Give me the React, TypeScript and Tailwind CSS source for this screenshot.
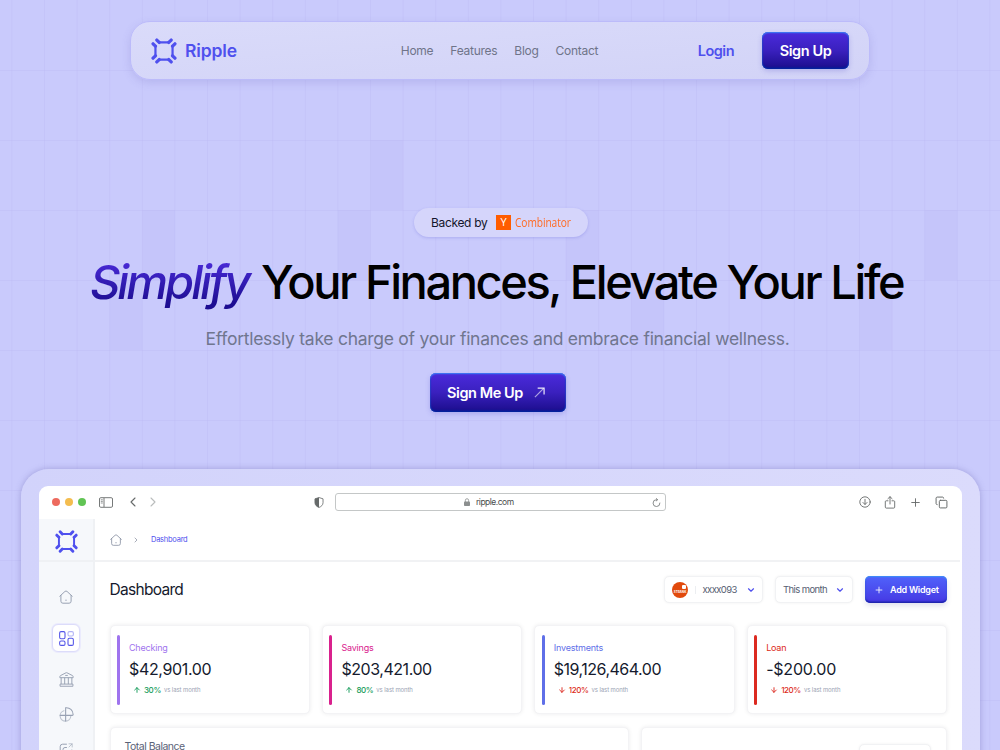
import { clsx } from "clsx";
import { ArrowDown, ArrowUp, ChevronDown, ChevronLeft, ChevronRight, Copy, Plus } from "lucide-react";

const LINKS = ["Home", "Features", "Blog", "Contact"];

// Columns and rows of the backdrop grid that carry a darker tile
const TILES = [
  [11, 2], [4, 3], [10, 3], [17, 3], [28, 3], [3, 4], [19, 4], [26, 4],
];

const ACCOUNTS = [
  { name: "Checking", amount: "$42,901.00", change: "30%", up: true, text: "text-[#9f74ee]", bar: "bg-[#9f74ee]", tracking: "tracking-[-0.35px]" },
  { name: "Savings", amount: "$203,421.00", change: "80%", up: true, text: "text-[#d9218d]", bar: "bg-[#d9218d]", tracking: "tracking-[-0.45px]" },
  { name: "Investments", amount: "$19,126,464.00", change: "120%", up: false, text: "text-[#5f6fe8]", bar: "bg-[#5f6fe8]", tracking: "tracking-[-0.5px]" },
  { name: "Loan", amount: "-$200.00", change: "120%", up: false, text: "text-[#dc2a20]", bar: "bg-[#dc2a20]", tracking: "tracking-[-0.2px]" },
];

function Logo({ className }: { className?: string }) {
  return (
    <svg viewBox="0 0 76 76" className={className} fill="none" stroke="currentColor" strokeLinecap="round" strokeLinejoin="round">
      {[0, 90, 180, 270].map((r) => (
        <g key={r} transform={`rotate(${r} 38 38)`}>
          <path d="M24 13H52" strokeWidth="6.5" />
          <path d="M17 6L24 13M59 6L52 13" strokeWidth="9.5" />
        </g>
      ))}
    </svg>
  );
}

function HomeIcon({ className }: { className?: string }) {
  return (
    <svg viewBox="0 0 14 14" className={className} fill="none" stroke="currentColor" strokeLinecap="round" strokeLinejoin="round">
      <path d="M.8 6.2 5.9 1.5a1.6 1.6 0 0 1 2.2 0l5.1 4.7" />
      <path d="M1.9 5.4v5.8a2 2 0 0 0 2 2h6.2a2 2 0 0 0 2-2V5.4" />
      <path d="M6.4 10.2h1.2" strokeWidth=".7" />
    </svg>
  );
}

function Backdrop() {
  const cols = Array.from({ length: 31 }, (_, i) => 11.9 + i * 32.6);
  const rows = Array.from({ length: 10 }, (_, i) => 70.5 + i * 70);
  return (
    <svg className="absolute inset-0 h-full w-full" viewBox="0 0 1000 750" aria-hidden="true">
      {TILES.map(([c, r]) => (
        <rect key={`${c}-${r}`} x={11.9 + c * 32.6} y={r * 70} width="32.6" height="70" fill="#c5c5fa" />
      ))}
      <g stroke="#b9b8f2" strokeOpacity=".34" strokeWidth=".9">
        {cols.map((x) => <path key={x} d={`M${x} 0V750`} />)}
        {rows.map((y) => <path key={y} d={`M0 ${y}H1000`} />)}
      </g>
    </svg>
  );
}

const darkButton =
  "flex items-center rounded-[6px] bg-linear-to-b from-[#4b2bdc] via-[#3a20be] to-[#1b0c8c] text-white font-semibold shadow-[inset_0_1px_1.5px_#3b82f6,inset_0_-1.5px_2px_#00209a,inset_0_0_1.5px_#2563eb,0_2px_5px_rgba(80,70,200,0.25)]";

function Navbar() {
  return (
    <nav className="grid h-[59px] w-[740px] shrink-0 grid-cols-[1fr_auto_1fr] items-center rounded-[20px] border border-[#bcbbfa] bg-linear-to-br from-[#dadbfa] to-[#d2d3f7] px-5 shadow-[0_3px_8px_rgba(110,105,190,0.2)]">
      <div className="flex items-center gap-[8px] text-[#4f50ee]">
        <Logo className="h-[26px] w-[26px]" />
        <span className="pt-px text-[17.5px] font-semibold tracking-[-0.15px]">Ripple</span>
      </div>
      <ul className="-ml-px flex gap-[17px] pt-px text-[12px] tracking-[-0.27px] text-[#6f7489]">
        {LINKS.map((l) => <li key={l}>{l}</li>)}
      </ul>
      <div className="flex items-center justify-end gap-7">
        <span className="pt-px text-[14.5px] font-semibold tracking-[-0.5px] text-[#4f50ee]">Login</span>
        <button type="button" className={clsx(darkButton, "h-[37px] w-[87px] justify-center text-[14.5px] tracking-[-0.4px]")}>
          Sign Up
        </button>
      </div>
    </nav>
  );
}

function Hero() {
  return (
    <section className="flex w-full flex-col items-center">
      <div className="mt-[128px] ml-[2px] flex h-[29px] w-[174px] items-center rounded-full bg-[#d5d5fb] pl-[17px] shadow-[0_1px_3px_rgba(110,110,220,0.3)]">
        <span className="w-[65px] pt-px text-[12px] tracking-[-0.33px] whitespace-nowrap text-[#14152b]">Backed by</span>
        <span className="flex h-[15px] w-[15px] items-center justify-center bg-[#ff5c00] font-['Open_Sans',sans-serif] text-[11px] text-white">Y</span>
        <span className="ml-1 origin-left scale-x-[.85] font-['Open_Sans',sans-serif] text-[12px] tracking-[-0.1px] text-[#ff6a22]">Combinator</span>
      </div>
      <h1 className="mt-[15px] flex h-[60px] w-full items-center pl-[90px] text-[47px] leading-[60px] font-medium whitespace-nowrap">
        <span className="-mr-1 w-[175px] bg-linear-to-b from-[#4a2ad8] from-15% to-[#1d0d92] to-85% bg-clip-text tracking-[-2.95px] text-transparent italic">Simplify</span>
        <span className="tracking-[-2.42px] text-black">Your Finances, Elevate Your Life</span>
      </h1>
      <p className="mt-[14px] -ml-[5px] text-[17.5px] leading-[26px] tracking-[-0.27px] whitespace-nowrap text-[#70768f]">
        Effortlessly take charge of your finances and embrace financial wellness.
      </p>
      <button type="button" className={clsx(darkButton, "mt-[21px] -ml-1 h-[39px] w-[136px] gap-[11px] pl-[17px] text-[14.5px] tracking-[-0.42px] whitespace-nowrap")}>
        Sign Me Up
        <svg viewBox="0 0 12 12" className="h-[11px] w-[11px]" fill="none" stroke="currentColor" strokeWidth="1.3">
          <path d="M1 11 10.5 1.5" strokeOpacity=".6" />
          <path d="M4 1.2h7v7" strokeOpacity=".9" />
        </svg>
      </button>
    </section>
  );
}

function Toolbar() {
  return (
    <div className="flex h-[33px] shrink-0 items-center pb-px pl-[13px] text-[#666a6a]">
      <div className="flex w-[47px] gap-[5px]">
        <i className="h-2 w-2 rounded-full bg-[#ed6a5e]" />
        <i className="h-2 w-2 rounded-full bg-[#f4bd4f]" />
        <i className="h-2 w-2 rounded-full bg-[#61c454]" />
      </div>
      <svg viewBox="0 0 14 11" className="h-[11px] w-[14px]" fill="none" stroke="currentColor" strokeWidth=".9">
        <rect x=".5" y=".7" width="13" height="9.6" rx="1.3" />
        <path d="M5 1v9" />
        <path d="M1.8 2.8h2M1.8 4.4h2M1.8 6h2" strokeWidth=".7" />
      </svg>
      <ChevronLeft className="ml-[12px] h-4 w-4" strokeWidth={1.6} />
      <ChevronRight className="ml-[4px] h-4 w-4 text-[#b9bcbc]" strokeWidth={1.6} />
      <svg viewBox="0 0 10 12" className="ml-[153px] h-[11px] w-[10px]">
        <path d="M5 .6 9.4 2v4.2c0 2.5-1.9 4.2-4.4 5.2C2.5 10.4.6 8.7.6 6.2V2z" fill="none" stroke="currentColor" strokeWidth=".9" />
        <path d="M5 .6.6 2v4.2c0 2.5 1.9 4.2 4.4 5.2z" fill="currentColor" />
      </svg>
      <div className="ml-[11px] flex h-[18px] w-[331px] items-center rounded-[3px] border border-[#c4c7c7] pr-[4px] pl-[128px]">
        <svg viewBox="0 0 6 8" className="h-2 w-[6px]" fill="#8c8f8f">
          <rect y="3.4" width="6" height="4.6" rx=".8" />
          <path d="M1.4 4V2.3a1.6 1.6 0 0 1 3.2 0V4" fill="none" stroke="#8c8f8f" strokeWidth=".8" />
        </svg>
        <span className="ml-[6px] pt-px text-[8.5px] tracking-[-0.5px] text-[#4a4d4d]">ripple.com</span>
        <svg viewBox="0 0 10 10" className="ml-auto h-[9px] w-[9px]" fill="none" stroke="currentColor" strokeWidth=".85" strokeLinecap="round" strokeLinejoin="round">
          <path d="M8.8 5.6A3.8 3.8 0 1 1 5 1.9h1" />
          <path d="M4.7.5 6.1 1.9 4.7 3.3" />
        </svg>
      </div>
      <div className="ml-auto flex items-center gap-[13px] pr-[14px]">
        <svg viewBox="0 0 12 12" className="h-3 w-3" fill="none" stroke="currentColor" strokeWidth=".9" strokeLinecap="round">
          <circle cx="6" cy="6" r="5.2" />
          <path d="M6 3.3v5M4 6.5l2 2 2-2" />
        </svg>
        <svg viewBox="0 0 12 13" className="h-[13px] w-3" fill="none" stroke="currentColor" strokeWidth=".9" strokeLinecap="round" strokeLinejoin="round">
          <path d="M4 4.8H2.2a.9.9 0 0 0-.9.9v5.4c0 .6.4 1 .9 1h7.6c.5 0 .9-.4.9-1V5.7a.9.9 0 0 0-.9-.9H8" />
          <path d="M6 8V.8M3.9 2.7 6 .7l2.1 2" />
        </svg>
        <Plus className="h-[13px] w-[13px]" strokeWidth={1.7} />
        <Copy className="h-[13px] w-[13px]" strokeWidth={1.8} />
      </div>
    </div>
  );
}

function Sidebar() {
  return (
    <aside className="flex w-[56px] shrink-0 flex-col items-center border-r-2 border-[#eff1f4] bg-[#f6f8fb] text-[#98a1b3]">
      <div className="flex h-[43px] w-[56px] shrink-0 items-center justify-center border-b-2 border-[#eff1f4] pt-1 text-[#4f50ee]">
        <Logo className="h-[23px] w-[23px]" />
      </div>
      <HomeIcon className="mt-[28px] h-[14px] w-[14px] shrink-0" />
      <div className="mt-[20px] flex h-[28px] w-[28px] shrink-0 items-center justify-center rounded-[6px] border border-[#dcdcfa] bg-white shadow-[0_0_0_1px_#ebebfd]">
        <svg viewBox="0 0 14 14" className="h-[15px] w-[15px]" fill="none" stroke="#5355e8">
          <rect x=".6" y=".6" width="5" height="6.6" rx="1.3" />
          <rect x="8.4" y=".6" width="5" height="4" rx="1.3" strokeOpacity=".45" />
          <rect x=".6" y="9.4" width="5" height="4" rx="1.3" />
          <rect x="8.4" y="6.8" width="5" height="6.6" rx="1.3" />
        </svg>
      </div>
      <svg viewBox="0 0 14 14" className="mt-[20px] h-[15px] w-[15px] shrink-0" fill="none" stroke="currentColor" strokeWidth=".9" strokeLinejoin="round">
        <path d="M.8 5.3c0-1.5 0-1.7.7-2L6.6.7a1 1 0 0 1 .8 0l5.1 2.6c.7.3.7.5.7 2z" />
        <path d="M2 5.3v6M5.3 5.3v6M8.7 5.3v6M12 5.3v6M1 13.3v-2h12v2zM5.8 3.2h2.4" />
      </svg>
      <svg viewBox="0 0 14 14" className="mt-[20px] h-[15px] w-[15px] shrink-0" fill="none" stroke="currentColor" strokeLinecap="round" strokeLinejoin="round">
        <path d="M4.6 3.4A5 5 0 1 0 11 8.5" strokeOpacity=".6" />
        <path d="M6.3.8c3.8-.3 6.8 2.2 6.9 6.3 0 .5-.3.7-.8.7H1M6.2.8V13" />
      </svg>
      <svg viewBox="0 0 14 14" className="mt-[21px] h-[14px] w-[14px] shrink-0" fill="none" stroke="currentColor" strokeLinecap="round" strokeLinejoin="round">
        <path d="M7.5 1.2H3.6A2.4 2.4 0 0 0 1.2 3.6v7a2.4 2.4 0 0 0 2.4 2.4h6.8a2.4 2.4 0 0 0 2.4-2.4V7" />
        <path d="M4 8.5V6.5a2 2 0 0 1 2-2h1.5" />
        <path d="M10 .8h3.2V4M13 1l-3 3" strokeOpacity=".6" />
      </svg>
    </aside>
  );
}

const selectBox =
  "flex h-[27px] items-center rounded-[5px] border border-[#f1f2f4] bg-white text-[9.5px] text-[#565e72] shadow-[0_0_3px_rgba(0,0,0,0.06)]";

const panel = "rounded-[5px] border border-[#f3f3f5] bg-white shadow-[0_0_4px_rgba(20,20,40,0.08)]";

function AccountCard({ name, amount, change, up, text, bar, tracking }: (typeof ACCOUNTS)[number]) {
  const Arrow = up ? ArrowUp : ArrowDown;
  return (
    <article className={clsx(panel, "flex h-[89px] pt-[9px] pl-[6.5px]")}>
      <i className={clsx("h-[70px] w-[3px] rounded-full", bar)} />
      <div className="pt-[6px] pl-[9px]">
        <p className={clsx("text-[9px] leading-[13px] tracking-[-0.2px]", text)}>{name}</p>
        <p className={clsx("mt-[5px] text-[16px] leading-[20px] text-[#151a2d]", tracking)}>{amount}</p>
        <div className={clsx("mt-[6px] ml-[4px] flex items-center text-[8px] leading-[10px]", up ? "text-[#129a58]" : "text-[#dc2a20]")}>
          <Arrow className="h-2 w-2" strokeWidth={2.8} />
          <span className="ml-[3px] font-medium tracking-[-0.4px]">{change}</span>
          <span className="ml-[3px] text-[6px] tracking-[-0.1px] text-[#9ba3b4]">vs last month</span>
        </div>
      </div>
    </article>
  );
}

function Dashboard() {
  return (
    <main className="flex min-w-0 flex-1 flex-col">
      <div className="mr-[2px] flex h-[43px] shrink-0 items-center border-b-2 border-[#f1f2f4] pl-[15px]">
        <HomeIcon className="h-3 w-3 text-[#8b93a5]" />
        <ChevronRight className="ml-[10px] h-[8px] w-[8px] text-[#7c8496]" strokeWidth={2} />
        <span className="ml-[11px] pt-px text-[7.5px] tracking-[-0.25px] text-[#4f50ee]">Dashboard</span>
      </div>
      <div className="pr-[15px] pl-[14.5px]">
        <header className="mt-[14px] flex h-[27px] items-center">
          <h2 className="pt-px text-[15.5px] tracking-[-0.7px] text-[#151a2d]">Dashboard</h2>
          <div className={clsx(selectBox, "ml-auto w-[99px] pl-[7px]")}>
            <span className="flex h-4 w-4 flex-col items-end justify-center rounded-full bg-[#e14a0c]">
              <i className="mr-[2px] h-[4px] w-[4px] rounded-[1px] bg-white" />
              <span className="mt-px w-4 text-center text-[3px] leading-[4px] font-bold text-white">STBANK</span>
            </span>
            <i className="ml-[7px] h-2 w-px bg-[#eceef1]" />
            <span className="ml-[6.5px] w-[34px] pt-px tracking-[-0.6px]">xxxx093</span>
            <ChevronDown className="ml-[9px] h-[10px] w-[10px] text-[#4f50ee]" strokeWidth={2.8} />
          </div>
          <div className={clsx(selectBox, "ml-[12px] w-[78px] pl-[7px]")}>
            <span className="w-[45px] pt-px tracking-[-0.6px] whitespace-nowrap">This month</span>
            <ChevronDown className="ml-[7px] h-[10px] w-[10px] text-[#4f50ee]" strokeWidth={2.8} />
          </div>
          <button type="button" className="ml-[12px] flex h-[27px] w-[82px] items-center rounded-[5px] bg-linear-to-b from-[#5062fb] to-[#4637e3] pl-[9px] text-[9px] font-semibold tracking-[-0.25px] whitespace-nowrap text-white shadow-[inset_0_1px_1.5px_#3b93f6,inset_0_-1.5px_1.5px_#1c20a8,0_3px_5px_rgba(60,60,140,0.15)]">
            <Plus className="mr-[6px] h-[10px] w-[10px]" strokeWidth={2} />
            Add Widget
          </button>
        </header>
        <div className="mt-[22px] grid grid-cols-4 gap-3">
          {ACCOUNTS.map((a) => <AccountCard key={a.name} {...a} />)}
        </div>
        <div className="mt-[12.5px] flex gap-3">
          <div className={clsx(panel, "h-[120px] w-[519px] pt-[13px] pl-[14px] text-[10.5px] leading-[12px] tracking-[-0.5px] text-[#5a6277]")}>Total Balance</div>
          <div className={clsx(panel, "h-[120px] flex-1 pt-[16px] pr-[15px]")}>
            <div className={clsx(selectBox, "ml-auto w-[72px]")} />
          </div>
        </div>
      </div>
    </main>
  );
}

export default function App() {
  return (
    <div className="relative h-[750px] w-[1000px] overflow-hidden bg-[#c9cafc] font-[Inter,sans-serif]">
      <Backdrop />
      <div className="relative flex flex-col items-center pt-[21px]">
        <Navbar />
        <Hero />
        <div className="mt-[57px] h-[400px] w-[959px] rounded-[28px] bg-linear-to-r from-[#d2d3fb] to-[#dbdbfc] pt-[17px] pr-[17.5px] pl-[18.5px] shadow-[0_0_6px_rgba(100,95,170,0.4)]">
          <div className="flex h-full flex-col overflow-hidden rounded-[9px] bg-white">
            <Toolbar />
            <div className="flex flex-1">
              <Sidebar />
              <Dashboard />
            </div>
          </div>
        </div>
      </div>
    </div>
  );
}
